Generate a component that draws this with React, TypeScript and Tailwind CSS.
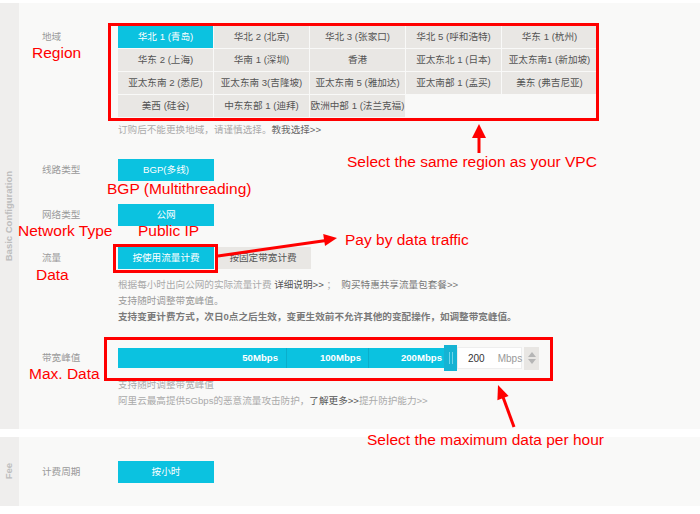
import React from 'react';

const regions = [
  '华北 1 (青岛)', '华北 2 (北京)', '华北 3 (张家口)', '华北 5 (呼和浩特)', '华东 1 (杭州)',
  '华东 2 (上海)', '华南 1 (深圳)', '香港', '亚太东北 1 (日本)', '亚太东南1 (新加坡)',
  '亚太东南 2 (悉尼)', '亚太东南 3(吉隆坡)', '亚太东南 5 (雅加达)', '亚太南部 1 (孟买)', '美东 (弗吉尼亚)',
  '美西 (硅谷)', '中东东部 1 (迪拜)', '欧洲中部 1 (法兰克福)',
];

const Label: React.FC<{ text: string; h?: string }> = ({ text, h = 'h-[22px] leading-[22px]' }) => (
  <div className={`w-[76px] shrink-0 text-[#9a9a9a] ${h}`}>{text}</div>
);

const CyanBtn: React.FC<{ text: string }> = ({ text }) => (
  <div className="w-[96px] h-[22px] leading-[22px] bg-[#0bc2e0] text-white text-center">{text}</div>
);

// 红色标注文字
const Note: React.FC<{ text: string; className: string }> = ({ text, className }) => (
  <div className={`absolute text-[15.5px] leading-[16px] text-[#ff0000] whitespace-nowrap font-['Liberation_Sans',sans-serif] ${className}`}>
    {text}
  </div>
);

export default function App() {
  return (
    <div className="relative w-[700px] h-[514px] overflow-hidden bg-white text-[9.6px] font-['Liberation_Sans','Noto_Sans_CJK_SC',sans-serif]">
      {/* 基础配置 */}
      <div className="mt-[3px] h-[426px] flex">
        <div className="w-[19px] shrink-0 bg-[#efeeed] flex items-center justify-center">
          <span className="-rotate-90 whitespace-nowrap text-[9.5px] font-bold text-[#bdbdbd]">Basic Configuration</span>
        </div>
        <div className="flex-1 bg-[#f9f9f8] pl-[23px] pt-[23px]">
          <div className="flex">
            <Label text="地域" />
            <div>
              <div className="grid grid-cols-[repeat(5,95px)] auto-rows-[22px] gap-px">
                {regions.map((r, i) => (
                  <div
                    key={r}
                    className={
                      i === 0
                        ? 'bg-[#0bc2e0] text-white text-center leading-[22px]'
                        : 'bg-[#e9e7e4] text-[#555] text-center leading-[22px] whitespace-nowrap'
                    }
                  >
                    {r}
                  </div>
                ))}
              </div>
              <div className="mt-[6px] leading-[14px] text-[#aaa]">
                订购后不能更换地域，请谨慎选择。<span className="text-[#666]">教我选择&gt;&gt;</span>
              </div>
            </div>
          </div>

          <div className="flex mt-[22px]">
            <Label text="线路类型" />
            <CyanBtn text="BGP(多线)" />
          </div>

          <div className="flex mt-[23px]">
            <Label text="网络类型" />
            <CyanBtn text="公网" />
          </div>

          <div className="flex mt-[21px]">
            <Label text="流量" />
            <div>
              <div className="flex gap-px">
                <CyanBtn text="按使用流量计费" />
                <div className="w-[96px] h-[22px] leading-[22px] bg-[#e9e7e4] text-[#555] text-center">按固定带宽计费</div>
              </div>
              <div className="mt-[8px] leading-[16px] text-[#aaa] whitespace-nowrap">
                根据每小时出向公网的实际流量计费 <span className="text-[#555]">详细说明&gt;&gt;</span> ；&nbsp; <span className="text-[#777]">购买特惠共享流量包套餐&gt;&gt;</span>
              </div>
              <div className="leading-[16px] text-[#999]">支持随时调整带宽峰值。</div>
              <div className="leading-[16px] text-[#7a7a7a] font-bold whitespace-nowrap">
                支持变更计费方式，次日0点之后生效，变更生效前不允许其他的变配操作，如调整带宽峰值。
              </div>
            </div>
          </div>

          <div className="flex mt-[20px]">
            <Label text="带宽峰值" h="h-[26px] leading-[26px]" />
            <div>
              <div className="flex items-center h-[26px]">
                <div className="flex w-[326px] h-[20px] bg-[#0bc2e0] text-white font-bold">
                  <div className="w-[169px] border-r border-[#0aaecb] text-right pr-[8px] leading-[20px]">50Mbps</div>
                  <div className="w-[82px] border-r border-[#0aaecb] text-right pr-[7px] leading-[20px]">100Mbps</div>
                  <div className="flex-1 text-right pr-[2px] leading-[20px]">200Mbps</div>
                </div>
                <div className="w-[13px] h-[26px] bg-[#16b3d3] flex items-center justify-center gap-[2px]">
                  <div className="w-px h-[12px] bg-[#6fd6ea]" />
                  <div className="w-px h-[12px] bg-[#6fd6ea]" />
                </div>
                <div className="w-[65px] h-[22px] bg-white border border-[#eeeeee] flex items-center text-[10px]">
                  <span className="ml-[10px] text-[#333]">200</span>
                  <span className="ml-[13px] text-[#999]">Mbps</span>
                </div>
                <div className="ml-[2px] w-[15px] h-[23px] bg-[#e8e6e3] flex flex-col items-center justify-center gap-[2px]">
                  <div className="w-0 h-0 border-l-[4px] border-r-[4px] border-b-[5px] border-l-transparent border-r-transparent border-b-[#b5b5b5]" />
                  <div className="w-0 h-0 border-l-[4px] border-r-[4px] border-t-[5px] border-l-transparent border-r-transparent border-t-[#b5b5b5]" />
                </div>
              </div>
              <div className="mt-[6px] leading-[16px] text-[#aaa]">支持随时调整带宽峰值</div>
              <div className="leading-[16px] text-[#aaa] whitespace-nowrap">
                阿里云最高提供5Gbps的恶意流量攻击防护，<span className="text-[#555]">了解更多&gt;&gt;</span>提升防护能力&gt;&gt;
              </div>
            </div>
          </div>
        </div>
      </div>

      {/* 费用 */}
      <div className="mt-[8px] h-[69px] flex">
        <div className="w-[19px] shrink-0 bg-[#efeeed] flex items-center justify-center">
          <span className="-rotate-90 whitespace-nowrap text-[9.5px] font-bold text-[#bdbdbd]">Fee</span>
        </div>
        <div className="flex-1 bg-[#f9f9f8] pl-[23px] pt-[24px]">
          <div className="flex">
            <Label text="计费周期" />
            <CyanBtn text="按小时" />
          </div>
        </div>
      </div>

      {/* 标注 */}
      <div className="absolute left-[108px] top-[23px] w-[491px] h-[98px] border-[3px] border-[#ff0000]" />
      <div className="absolute left-[113px] top-[244px] w-[105px] h-[29px] border-[3px] border-[#ff0000]" />
      <div className="absolute left-[104px] top-[337px] w-[449px] h-[44px] border-[3px] border-[#ff0000]" />

      <svg className="absolute left-0 top-0" width="700" height="514" viewBox="0 0 700 514">
        <line x1="479" y1="153" x2="479" y2="136" stroke="#ff0000" strokeWidth="3" />
        <polygon points="479,124 472,138 486,138" fill="#ff0000" />
        <line x1="218" y1="256" x2="326" y2="240.5" stroke="#ff0000" strokeWidth="3" />
        <polygon points="337,238 325,246 323.2,234" fill="#ff0000" />
        <line x1="514" y1="427" x2="503" y2="397" stroke="#ff0000" strokeWidth="3" />
        <polygon points="498,385 508.6,396 497.4,400.2" fill="#ff0000" />
      </svg>

      <Note text="Region" className="left-[32px] top-[45px]" />
      <Note text="Select the same region as your VPC" className="left-[347px] top-[154px]" />
      <Note text="BGP (Multithreading)" className="left-[107px] top-[181px]" />
      <Note text="Network Type" className="left-[18px] top-[223px]" />
      <Note text="Public IP" className="left-[138px] top-[223px]" />
      <Note text="Pay by data traffic" className="left-[345px] top-[232px]" />
      <Note text="Data" className="left-[36px] top-[267px]" />
      <Note text="Max. Data" className="left-[29px] top-[366px]" />
      <Note text="Select the maximum data per hour" className="left-[367px] top-[432px]" />
    </div>
  );
}
